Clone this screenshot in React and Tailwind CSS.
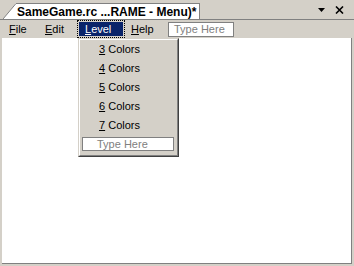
export default function App() {
  const items = ["3", "4", "5", "6", "7"];
  return (
    <div className="w-[354px] h-[266px] bg-[#d4d0c8] flex flex-col overflow-hidden relative font-['Liberation_Sans',Arial,sans-serif] text-[11px] text-black leading-none">
      {/* Tab strip */}
      <div className="h-[20px] flex border-b border-[#808080] shrink-0">
        <div className="flex items-end pl-[3px]">
          <svg width="13" height="16" viewBox="0 0 13 16" className="block">
            <polygon points="0,16 13,0 13,16" fill="#ffffff" />
            <line x1="0" y1="16" x2="13" y2="0.5" stroke="#808080" strokeWidth="1" />
          </svg>
          <div className="h-[16px] bg-white border-t border-r border-[#808080] pl-[1px] pr-[3px] flex items-center font-bold text-[12px] whitespace-nowrap">
            SameGame.rc ...RAME - Menu)*
          </div>
        </div>
        <div className="ml-auto flex items-center gap-[10px] pr-[10px]">
          <svg width="7" height="4" viewBox="0 0 7 4" className="block">
            <polygon points="0,0 7,0 3.5,4" fill="#000" />
          </svg>
          <svg width="9" height="8" viewBox="0 0 9 8" className="block">
            <path d="M1 0.5 L8 7.5 M8 0.5 L1 7.5" stroke="#000" strokeWidth="1.6" />
          </svg>
        </div>
      </div>

      {/* Menu bar */}
      <div className="h-[18px] flex items-center pl-[9px] shrink-0">
        <div className="w-[36px]"><u className="underline decoration-1 underline-offset-[1px]">F</u>ile</div>
        <div className="w-[32px]"><u className="underline decoration-1 underline-offset-[1px]">E</u>dit</div>
        <div className="w-[48px] h-[18px] border border-dotted border-black p-px">
          <div className="w-full h-full bg-[#0a246a] text-white flex items-center pl-[6px]">
            <span><u className="underline decoration-1 underline-offset-[1px]">L</u>evel</span>
          </div>
        </div>
        <div className="w-[43px] pl-[6px]"><u className="underline decoration-1 underline-offset-[1px]">H</u>elp</div>
        <div className="w-[66px] h-[15px] bg-white border border-[#808080] text-[#808080] flex items-center pl-[5px]">
          Type Here
        </div>
      </div>

      {/* Content */}
      <div className="flex-1 bg-white ml-[2px] mr-[2px] mb-[2px] border-r border-b border-[#808080]" />

      {/* Dropdown */}
      <div className="absolute top-[38px] left-[78px] w-[101px] h-[119px] border border-t-[#d4d0c8] border-l-[#d4d0c8] border-r-[#404040] border-b-[#404040]">
        <div className="w-full h-full bg-[#d4d0c8] border border-t-white border-l-white border-r-[#808080] border-b-[#808080] flex flex-col">
          {items.map((n) => (
            <div key={n} className="h-[19px] flex items-center pl-[19px]">
              <span><u className="underline decoration-1 underline-offset-[1px]">{n}</u> Colors</span>
            </div>
          ))}
          <div className="mt-[2px] ml-[2px] w-[92px] h-[14px] bg-white border border-[#808080] text-[#808080] flex items-center pl-[14px]">
            Type Here
          </div>
        </div>
      </div>
    </div>
  );
}
